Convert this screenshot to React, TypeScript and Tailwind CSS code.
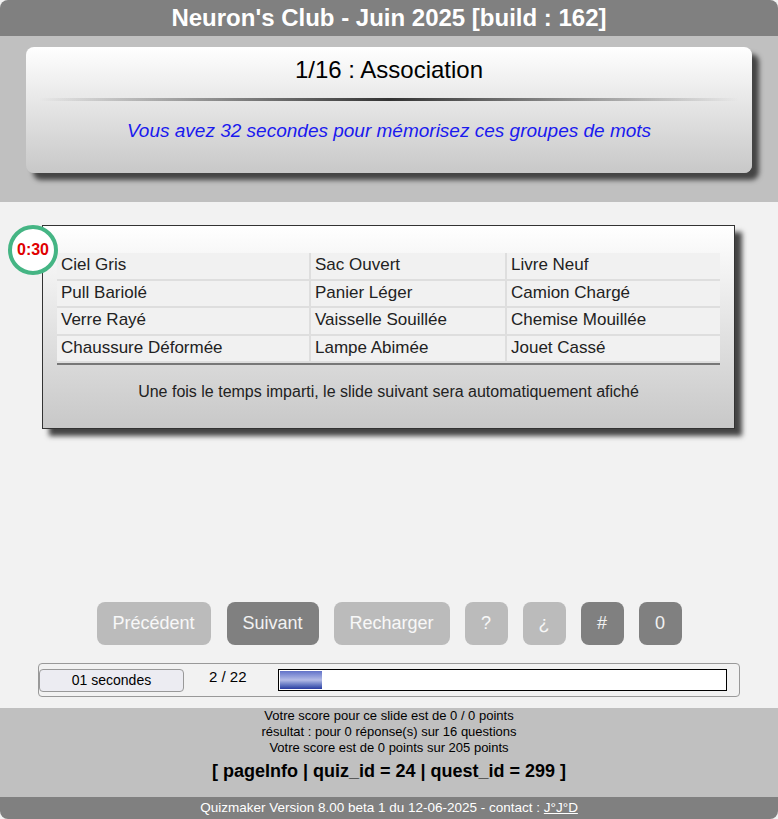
export default function App() {
  const rows = [
    ["Ciel Gris", "Sac Ouvert", "Livre Neuf"],
    ["Pull Bariolé", "Panier Léger", "Camion Chargé"],
    ["Verre Rayé", "Vaisselle Souillée", "Chemise Mouillée"],
    ["Chaussure Déformée", "Lampe Abimée", "Jouet Cassé"],
  ];
  const btnBase = "h-[43px] rounded-lg text-[18px] text-white/90 flex items-center justify-center";
  return (
    <div className="w-[778px] h-[819px] bg-[#f2f2f2] flex flex-col overflow-hidden" style={{ fontFamily: '"Liberation Sans", Arial, sans-serif' }}>
      <div className="h-[36px] bg-[#808080] rounded-t-lg flex items-center justify-center text-white font-bold text-[24px]">
        Neuron's Club - Juin 2025 [build : 162]
      </div>
      <div className="h-[166px] bg-[#c0c0c0] pt-[11px] px-[26px]">
        <div className="h-[126px] rounded-lg bg-gradient-to-b from-white to-[#c8c8c8] shadow-[7px_7px_5px_#444] flex flex-col items-center">
          <div className="mt-[8px] text-[24px] text-black leading-[30px]">1/16 : Association</div>
          <div className="mt-[13px] w-[700px] h-[3px] bg-gradient-to-r from-transparent via-[#333] to-transparent" />
          <div className="mt-[16px] text-[19px] italic text-[#1a1aee]">Vous avez 32 secondes pour mémorisez ces groupes de mots</div>
        </div>
      </div>
      <div className="flex-1 relative">
        <div className="ml-[42px] mt-[23px] w-[693px] h-[204px] border border-[#333] bg-gradient-to-b from-white to-[#c8c8c8] shadow-[7px_7px_5px_#444] pt-[27px] px-[14px]">
          <div className="border-b-2 border-[#777]">
            {rows.map((r, i) => (
              <div key={i} className="grid grid-cols-[254px_196px_213px] h-[27.5px]">
                {r.map((c, j) => (
                  <div key={j} className="bg-[#f1f1f1] border-b-2 border-r-2 border-[#dedede] last:border-r-0 px-[4px] text-[17px] text-[#222] leading-[24px]">
                    {c}
                  </div>
                ))}
              </div>
            ))}
          </div>
          <div className="mt-[15px] text-center text-[16px] text-[#222]">
            Une fois le temps imparti, le slide suivant sera automatiquement afiché
          </div>
        </div>
        <div className="absolute left-[8px] top-[23px] w-[50px] h-[50px] rounded-full bg-white border-[4px] border-[#45b584] flex items-center justify-center text-[#e00000] font-bold text-[16px]">
          0:30
        </div>
        <div className="absolute left-0 right-0 top-[400px] flex justify-center gap-[15px]">
          <div className={`${btnBase} w-[114px] bg-[#bbbbbb]`}>Précédent</div>
          <div className={`${btnBase} w-[92px] bg-[#808080] ml-[1px]`}>Suivant</div>
          <div className={`${btnBase} w-[116px] bg-[#bbbbbb]`}>Recharger</div>
          <div className={`${btnBase} w-[43px] bg-[#bbbbbb]`}>?</div>
          <div className={`${btnBase} w-[43px] bg-[#bbbbbb]`}>¿</div>
          <div className={`${btnBase} w-[43px] bg-[#808080]`}>#</div>
          <div className={`${btnBase} w-[43px] bg-[#808080]`}>0</div>
        </div>
        <div className="absolute left-[38px] top-[461px] w-[702px] h-[34px] border border-[#999] rounded flex items-center">
          <div className="w-[145px] h-[23px] bg-[#ececf2] border border-[#999] rounded text-[14px] text-black flex items-center justify-center">01 secondes</div>
          <div className="ml-[25px] text-[15px] text-black -mt-[6px]">2 / 22</div>
          <div className="ml-[31px] w-[449px] h-[22px] border border-black bg-white p-[1px]">
            <div className="w-[42px] h-full bg-gradient-to-b from-[#6272c8] via-[#b4bbe6] to-[#2a3aa0]" />
          </div>
        </div>
      </div>
      <div className="h-[89px] bg-[#c0c0c0] flex flex-col items-center pt-0 text-[13px] text-black leading-[16px]">
        <div>Votre score pour ce slide est de 0 / 0 points</div>
        <div>résultat : pour 0 réponse(s) sur 16 questions</div>
        <div>Votre score est de 0 points sur 205 points</div>
        <div className="mt-[4px] font-bold text-[18px] leading-[22px]">[ pageInfo | quiz_id = 24 | quest_id = 299 ]</div>
      </div>
      <div className="h-[22px] bg-[#808080] rounded-b-lg text-white text-[13.5px] flex items-center justify-center">
        Quizmaker Version 8.00 beta 1 du 12-06-2025 - contact :&nbsp;<span className="underline">J°J°D</span>
      </div>
    </div>
  );
}
